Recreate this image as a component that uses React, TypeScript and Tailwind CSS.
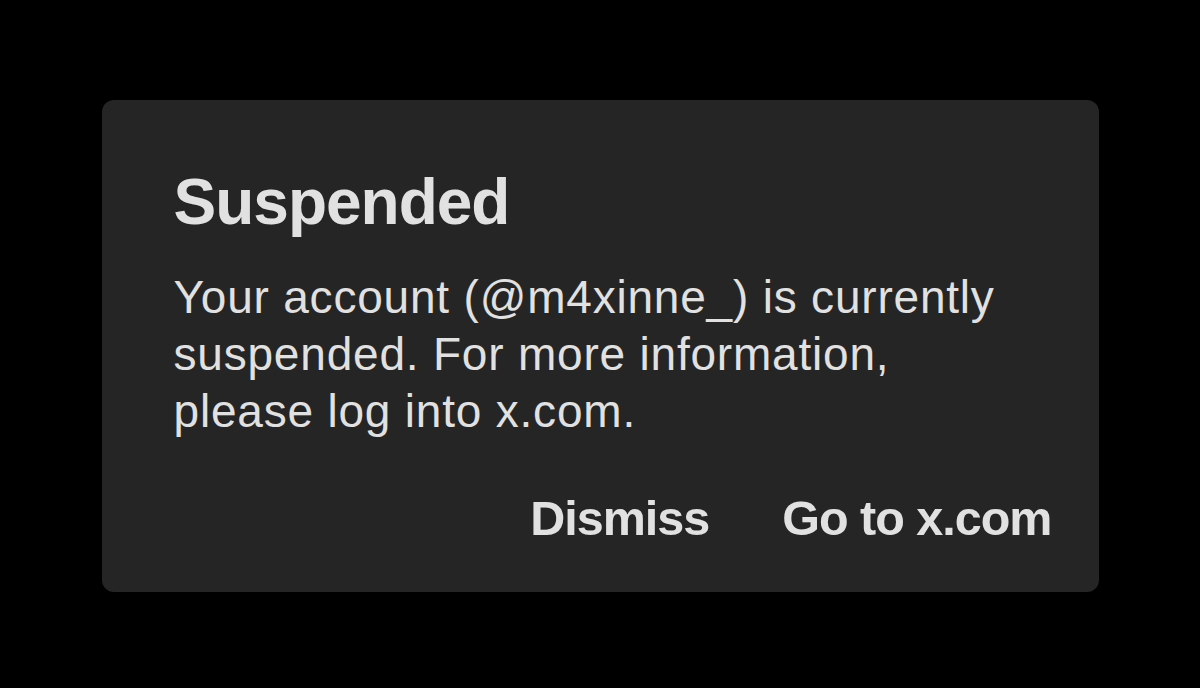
import React from "react";

const App = () => {
  return (
    <main className="flex h-[688px] w-[1200px] items-start justify-center bg-black pt-[100px] font-['Liberation_Sans',Arial,sans-serif] text-[#e1e1e1]">
      <div className="flex h-[492px] w-[997px] flex-col rounded-[12px] bg-[#252525] pl-[72px] pr-[47px] pt-[59px]">
        <h1 className="text-[64px] font-bold leading-[86px] tracking-[-1px]">
          Suspended
        </h1>
        <p className="mt-[24px] w-[845px] text-[46px] leading-[57px] tracking-[0.8px]">
          Your account (@m4xinne_) is currently suspended. For more
          information, please log into x.com.
        </p>
        <div className="mt-[50px] flex justify-end gap-[73px]">
          <button className="text-[48.5px] font-bold leading-[56px] tracking-[-1px]">
            Dismiss
          </button>
          <button className="text-[48.5px] font-bold leading-[56px] tracking-[-1px]">
            Go to x.com
          </button>
        </div>
      </div>
    </main>
  );
};

export default App;
